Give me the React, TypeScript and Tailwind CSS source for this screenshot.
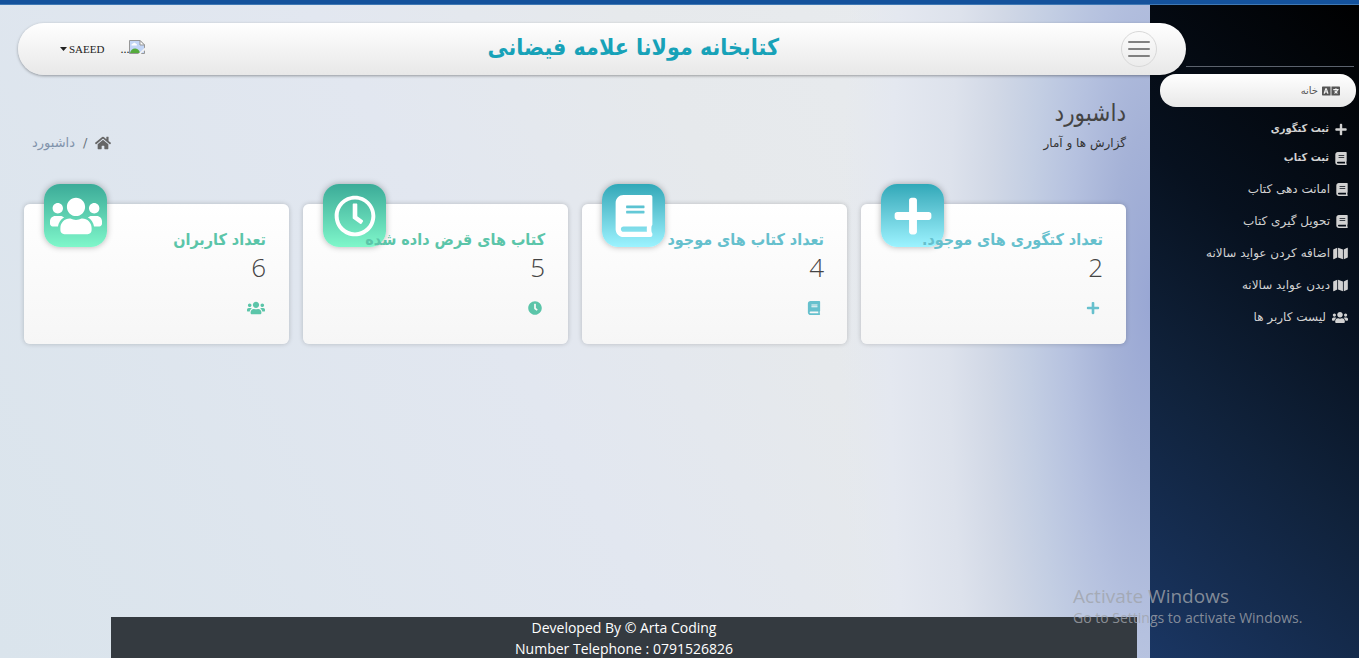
import { FaBook, FaClock, FaHome, FaLanguage, FaMap, FaPlus, FaRegClock, FaUsers } from 'react-icons/fa';
import type { IconType } from 'react-icons';

const teal = {
  text: 'text-[#66c0cd]',
  tile: 'bg-linear-to-b from-[#2fa8b8] to-[#9cf3ff]',
};
const green = {
  text: 'text-[#5bc5a9]',
  tile: 'bg-linear-to-b from-[#3bab98] to-[#7ff7ca]',
};

type Tone = typeof teal;

const cards: { title: string; value: number; Big: IconType; Small: IconType; tone: Tone }[] = [
  { title: 'تعداد کتگوری های موجود.', value: 2, Big: FaPlus, Small: FaPlus, tone: teal },
  { title: 'تعداد کتاب های موجود', value: 4, Big: FaBook, Small: FaBook, tone: teal },
  { title: 'کتاب های قرض داده شده', value: 5, Big: FaRegClock, Small: FaClock, tone: green },
  { title: 'تعداد کاربران', value: 6, Big: FaUsers, Small: FaUsers, tone: green },
];

const firstLinks: { label: string; Icon: IconType }[] = [
  { label: 'ثبت کتگوری', Icon: FaPlus },
  { label: 'ثبت کتاب', Icon: FaBook },
];

const links: { label: string; Icon: IconType; icon: string }[] = [
  { label: 'امانت دهی کتاب', Icon: FaBook, icon: 'h-[13px] w-3 ml-1.5' },
  { label: 'تحویل گیری کتاب', Icon: FaBook, icon: 'h-[13px] w-3 ml-1.5' },
  { label: 'اضافه کردن عواید سالانه', Icon: FaMap, icon: 'h-[13px] w-[15px] ml-[3px]' },
  { label: 'دیدن عواید سالانه', Icon: FaMap, icon: 'h-[13px] w-[15px] ml-[3px]' },
  { label: 'لیست کاربر ها', Icon: FaUsers, icon: 'h-[13px] w-4 ml-1.5' },
];

function BrokenImage() {
  return (
    <svg viewBox="0 0 16 16" className="size-4" aria-hidden="true">
      <path d="M.5 1.500h10.500l4.500 4.500v8.500H.5z" fill="#c3d6f7" stroke="#979797" />
      <path d="M11 1.500V6h4.500z" fill="#fff" stroke="#979797" />
      <path d="M2.500 6.500c-.3-1.200.7-1.900 1.500-1.700.4-1.500 2.500-1.500 2.900 0 1 0 1.300 1 .8 1.700z" fill="#fff" />
      <path d="M1 14c.5-3 3-4.800 5.500-4.500C9 9.700 10.500 11.500 11 14z" fill="#55ab3c" />
      <path d="M8 16l8-7.500v2.700L12.500 14l-1 2z" fill="#f2f2f2" />
    </svg>
  );
}

function StatCard({ title, value, Big, Small, tone }: (typeof cards)[number]) {
  return (
    <section className="relative h-[140px] rounded-md bg-linear-to-b from-white to-[#f6f6f6] px-[23px] pt-6 shadow-[0_0_5px_rgba(0,0,0,0.2)]">
      <div className={`absolute -top-5 left-5 flex size-[63px] items-center justify-center rounded-2xl text-white shadow-[0_0_6px_rgba(0,0,0,0.3)] ${tone.tile}`}>
        <Big className={Big === FaUsers ? 'size-[52px]' : 'size-[42px]'} />
      </div>
      <h2 className={`relative font-['DejaVu_Sans_Condensed','DejaVu_Sans',sans-serif] text-base leading-6 font-bold whitespace-nowrap ${tone.text}`}>{title}</h2>
      <p className="font-['Open_Sans',sans-serif] text-[26px] leading-[30px] font-light text-[#444]">{value}</p>
      <div className={`mt-4 flex h-5 w-5 items-center justify-center ${tone.text}`}>
        <Small className={Small === FaUsers ? 'size-[18px]' : 'size-[14px]'} />
      </div>
    </section>
  );
}

export default function App() {
  return (
    <div dir="rtl" className="relative flex min-h-screen flex-col overflow-hidden font-['DejaVu_Sans','Noto_Sans',sans-serif]">
      <div className="h-[5px] border-b border-[#3f78b4] bg-[#14529c]" />
      <div className="flex flex-1">
        <aside className="w-[209px] shrink-0 bg-[linear-gradient(220deg,#000,#07111f_38%,#10223b_64%,#1a3663)] text-[#d2d2d2]">
          <div className="mr-[5px] h-[62px] w-[168px] border-b border-[#5b626d]" />
          <nav>
            <a href="#home" className="mt-[7px] mr-[3px] ml-2.5 flex h-[33px] items-center gap-1 rounded-2xl bg-linear-to-b from-white to-[#e8e8e8] pr-4 text-[10px] text-[#555]">
              <FaLanguage className="size-[18px]" />
              خانه
            </a>
            <ul className="mt-2 pr-3 font-['DejaVu_Sans_Condensed','DejaVu_Sans',sans-serif]">
              {firstLinks.map(({ label, Icon }) => (
                <li key={label}>
                  <a href="#register" className="flex h-[29px] items-center gap-1.5 text-[11px] font-bold">
                    <Icon className="h-[13px] w-3" />
                    {label}
                  </a>
                </li>
              ))}
            </ul>
            <ul className="pr-[11px]">
              {links.map(({ label, Icon, icon }) => (
                <li key={label}>
                  <a href="#section" className="flex h-8 items-center text-xs">
                    <Icon className={icon} />
                    {label}
                  </a>
                </li>
              ))}
            </ul>
          </nav>
        </aside>

        <div className="flex min-w-0 flex-1 flex-col bg-[radial-gradient(ellipse_310px_1300px_at_100%_45%,#99a7d4,#a5b2d7_13%,#b5c1df_26%,#c3cee3_39%,#d1d8e6_52%,#dde2ec_65%,#e4e8f0_84%,#e6e9ed00),linear-gradient(60deg,#dae4ec,#e2e7f0_45%,#e6e9ec_65%,#e9ecef)]">
          <header className="relative z-10 mt-[18px] -mr-9 ml-[18px] flex h-[52px] items-center justify-between rounded-full bg-linear-to-b from-white to-[#e8e8e8] pr-[29px] pl-[42px] shadow-[0_1px_3px_rgba(0,0,0,0.35)]">
            <button type="button" aria-label="منو" className="flex size-9 flex-col items-center justify-center gap-[5px] rounded-full border border-[#d8d8d8]">
              <span className="h-0.5 w-[22px] rounded-full bg-[#808080]" />
              <span className="h-0.5 w-[22px] rounded-full bg-[#808080]" />
              <span className="h-0.5 w-[22px] rounded-full bg-[#808080]" />
            </button>
            <h1 className="mb-1 font-['DejaVu_Sans_Condensed','DejaVu_Sans',sans-serif] text-[23px] font-bold text-[#17a2b8]">کتابخانه مولانا علامه فیضانی</h1>
            <div className="flex items-center gap-4 font-['Liberation_Serif',serif] text-xs text-[#222]">
              <span className="mb-1 flex items-end">
                <BrokenImage />
                <span className="leading-3">...</span>
              </span>
              <button type="button" className="flex items-center gap-0.5 text-[11px]">
                SAEED
                <svg viewBox="0 0 7 4" className="h-1 w-[7px]" fill="currentColor" aria-hidden="true">
                  <path d="M0 0h7L3.500 4z" />
                </svg>
              </button>
            </div>
          </header>

          <main className="flex-1 px-6">
            <div className="mt-5 flex items-end justify-between">
              <div>
                <h2 className="font-['DejaVu_Sans_Condensed','DejaVu_Sans',sans-serif] text-2xl leading-9 font-light text-[#444]">داشبورد</h2>
                <p className="text-xs leading-6 text-[#333]">گزارش ها و آمار</p>
              </div>
              <nav className="flex items-center gap-2 pl-2 text-[13px] leading-6">
                <a href="#home" aria-label="خانه" className="text-[#666]">
                  <FaHome className="size-4" />
                </a>
                <span className="text-[#6c757d]">/</span>
                <span className="text-[#8193ab]">داشبورد</span>
              </nav>
            </div>
            <div className="mt-[49px] grid grid-cols-4 gap-3.5">
              {cards.map((card) => (
                <StatCard key={card.title} {...card} />
              ))}
            </div>
          </main>

          <footer dir="ltr" className="mr-[13px] ml-[111px] h-[41px] bg-[#343a40] text-center font-['Open_Sans',sans-serif] text-sm leading-[21px] text-white">
            <p>Developed By © Arta Coding</p>
            <p>Number Telephone : 0791526826</p>
          </footer>
        </div>
      </div>

      <div dir="ltr" className="pointer-events-none absolute right-[50px] bottom-[30px] z-20 w-[236px] font-['Open_Sans',sans-serif] text-[#a0a4ab]/80">
        <p className="text-[19px] leading-6">Activate Windows</p>
        <p className="text-sm leading-5">Go to Settings to activate Windows.</p>
      </div>
    </div>
  );
}
